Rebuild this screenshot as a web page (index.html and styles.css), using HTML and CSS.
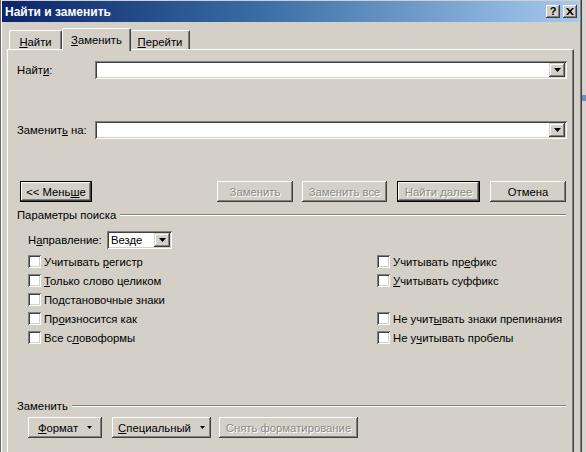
FILE: index.html
```html
<!DOCTYPE html>
<html lang="ru">
<head>
<meta charset="utf-8">
<title>Найти и заменить</title>
<link rel="stylesheet" href="styles.css">
</head>
<body>
<div class="window">
  <div class="titlebar">
    <span class="title">Найти и заменить</span>
    <div class="tb-btns">
      <span class="tbb help">?</span>
      <span class="tbb close"><svg width="8" height="7" viewBox="0 0 8 7"><path d="M0 0h2l2 2.2L6 0h2L5 3.5 8 7H6L4 4.8 2 7H0l3-3.5z" fill="#000"/></svg></span>
    </div>
  </div>
  <div class="content">
    <div class="tabs">
      <div class="tab t1"><span><u>Н</u>айти</span></div>
      <div class="tab t2 active"><span><u>З</u>аменить</span></div>
      <div class="tab t3"><span><u>П</u>ерейти</span></div>
    </div>
    <div class="panel">
      <div class="field-row first">
        <span class="field-label">Найт<u>и</u>:</span>
        <div class="combo wide"><span class="combo-text"></span><span class="drop"><svg width="7" height="4" viewBox="0 0 7 4"><path d="M0 0h7L3.5 4z" fill="#000"/></svg></span></div>
      </div>
      <div class="field-row second">
        <span class="field-label">Заменит<u>ь</u> на:</span>
        <div class="combo wide"><span class="combo-text"></span><span class="drop"><svg width="7" height="4" viewBox="0 0 7 4"><path d="M0 0h7L3.5 4z" fill="#000"/></svg></span></div>
      </div>
      <div class="btn-row">
        <span class="btn default less"><span>&lt;&lt; Мень<u>ш</u>е</span></span>
        <span class="btn disabled b-rep">Заменить</span>
        <span class="btn disabled b-repall">Заменить все</span>
        <span class="btn default disabled b-next">Найти далее</span>
        <span class="btn b-cancel">Отмена</span>
      </div>
      <div class="group-head params"><span class="group-title">Параметры поиска</span><span class="etch"></span></div>
      <div class="dir-row">
        <span class="dir-label">Н<u>а</u>правление:</span>
        <div class="combo dir"><span class="combo-text">Везде</span><span class="drop"><svg width="7" height="4" viewBox="0 0 7 4"><path d="M0 0h7L3.5 4z" fill="#000"/></svg></span></div>
      </div>
      <div class="checks">
        <label class="chk c-l r1"><span class="box"></span><span>Учитывать <u>р</u>егистр</span></label>
        <label class="chk c-r r1"><span class="box"></span><span>Учитывать пр<u>е</u>фикс</span></label>
        <label class="chk c-l r2"><span class="box"></span><span><u>Т</u>олько слово целиком</span></label>
        <label class="chk c-r r2"><span class="box"></span><span><u>У</u>читывать суффикс</span></label>
        <label class="chk c-l r3"><span class="box"></span><span>Подстановочные знаки</span></label>
        <label class="chk c-l r4"><span class="box"></span><span>Пр<u>о</u>износится как</span></label>
        <label class="chk c-r r4"><span class="box"></span><span>Не учит<u>ы</u>вать знаки препинания</span></label>
        <label class="chk c-l r5"><span class="box"></span><span>Все с<u>л</u>овоформы</span></label>
        <label class="chk c-r r5"><span class="box"></span><span>Не у<u>ч</u>итывать пробелы</span></label>
      </div>
      <div class="group-head repl"><span class="group-title">Заменить</span><span class="etch"></span></div>
      <div class="bottom-row">
        <span class="btn b-fmt"><span><u>Ф</u>ормат</span><svg class="tri" width="5" height="3" viewBox="0 0 5 3"><path d="M0 0h5L2.5 3z" fill="#000"/></svg></span>
        <span class="btn b-spec"><span><u>С</u>пециальный</span><svg class="tri" width="5" height="3" viewBox="0 0 5 3"><path d="M0 0h5L2.5 3z" fill="#000"/></svg></span>
        <span class="btn disabled b-clear">Снять форматирование</span>
      </div>
    </div>
  </div>
</div>
<div class="desktop"><span class="desk-mark"></span></div>
</body>
</html>
```
FILE: styles.css
```css
html, body {
  margin: 0;
  padding: 0;
}
body {
  width: 586px;
  height: 452px;
  overflow: hidden;
  display: flex;
  background: #d6d3cc;
  font-family: "Liberation Sans", Arial, sans-serif;
  font-size: 11.3px;
  color: #000;
}
u { text-decoration: underline; text-underline-offset: 1px; }

.window {
  flex: none;
  width: 582px;
  height: 480px;
  box-sizing: border-box;
  background: #d4d0c8;
  border-left: 1px solid #6a6a6a;
  border-right: 1px solid #404040;
  box-shadow: inset 1px 0 #fff, inset -1px 0 #808080;
  padding: 1px 2px 0 1px;
  display: flex;
  flex-direction: column;
}

.titlebar {
  height: 21px;
  flex: none;
  display: flex;
  align-items: center;
  justify-content: space-between;
  background: linear-gradient(to right, #0a246a 0%, #3a6ea5 45%, #a6caf0 100%);
  padding: 0 2px 0 3px;
}
.title {
  color: #fff;
  font-weight: bold;
  font-size: 12px;
}
.tb-btns {
  display: flex;
  gap: 3px;
}
.tbb {
  width: 14px;
  height: 13px;
  box-sizing: border-box;
  background: #d4d0c8;
  box-shadow: inset -1px -1px #404040, inset 1px 1px #fff, inset -2px -2px #808080;
  display: flex;
  align-items: center;
  justify-content: center;
  font-weight: bold;
  font-size: 11px;
  line-height: 1;
}

.content {
  display: flex;
  flex-direction: column;
  padding: 0 5px 0 5px;
}

.tabs {
  display: flex;
  align-items: flex-end;
  height: 29px;
  padding-left: 2px;
  position: relative;
  z-index: 1;
  margin-bottom: -2px;
}
.tab {
  height: 19px;
  box-sizing: border-box;
  border-top: 1px solid #fff;
  border-left: 1px solid #fff;
  border-right: 1px solid #404040;
  border-radius: 2px 2px 0 0;
  box-shadow: inset -1px 0 #808080;
  display: flex;
  align-items: center;
  justify-content: center;
  margin-bottom: 2px;
  padding-top: 3px;
}
.t1 { width: 53px; }
.t2 { width: 69px; }
.t3 { width: 59px; border-left: none; }
.tab.active {
  height: 23px;
  margin-bottom: 0;
  background: #d4d0c8;
  padding-top: 2px;
  padding-bottom: 2px;
}

.panel {
  height: 420px;
  box-sizing: border-box;
  border-top: 1px solid #fff;
  border-left: 1px solid #fff;
  border-right: 1px solid #404040;
  box-shadow: inset -1px 0 #808080;
  padding: 0 6px 0 9px;
  display: flex;
  flex-direction: column;
}

.field-row {
  display: flex;
  align-items: center;
}
.field-row.first { margin-top: 11px; }
.field-row.second { margin-top: 42px; }
.field-label {
  width: 78px;
  flex: none;
}

.combo {
  height: 18px;
  box-sizing: border-box;
  background: #fff;
  box-shadow: inset 1px 1px #808080, inset -1px -1px #fff, inset 2px 2px #404040, inset -2px -2px #d4d0c8;
  display: flex;
  align-items: center;
  justify-content: space-between;
  padding: 2px;
}
.combo.wide { flex: 1; }
.combo-text { padding-left: 2px; }
.drop {
  width: 16px;
  height: 14px;
  box-sizing: border-box;
  background: #d4d0c8;
  box-shadow: inset -1px -1px #404040, inset 1px 1px #d4d0c8, inset -2px -2px #808080, inset 2px 2px #fff;
  display: flex;
  align-items: center;
  justify-content: center;
}

.btn {
  height: 21px;
  box-sizing: border-box;
  background: #d4d0c8;
  box-shadow: inset -1px -1px #404040, inset 1px 1px #fff, inset -2px -2px #808080;
  display: flex;
  align-items: center;
  justify-content: center;
  flex: none;
  white-space: nowrap;
}
.btn.default {
  box-shadow: inset 0 0 0 1px #000, inset -2px -2px #404040, inset 2px 2px #fff, inset -3px -3px #808080;
}
.btn.disabled {
  color: #8c8a84;
  text-shadow: 1px 1px 0 #fff;
}

.btn-row {
  display: flex;
  margin-top: 42px;
}
.less { width: 72px; margin-left: 3px; }
.b-rep { width: 76px; margin-left: 125px; }
.b-repall { width: 85px; margin-left: 9px; }
.b-next { width: 83px; margin-left: 10px; }
.b-cancel { width: 76px; margin-left: 10px; }

.group-head {
  display: flex;
  align-items: center;
  height: 13px;
}
.group-head.params { margin-top: 6px; }
.group-head.repl { margin-top: 52px; }
.etch {
  flex: 1;
  height: 0;
  border-top: 1px solid #808080;
  border-bottom: 1px solid #fff;
  margin-left: 4px;
  margin-right: 1px;
}

.dir-row {
  display: flex;
  align-items: center;
  margin-top: 10px;
  padding-left: 11px;
}
.dir-label { width: 79px; flex: none; }
.combo.dir { width: 65px; }

.checks {
  display: grid;
  grid-template-columns: 349px 1fr;
  grid-template-rows: repeat(5, 19px);
  margin-top: 3px;
  padding-left: 11px;
}
.chk {
  display: flex;
  align-items: center;
  gap: 3px;
}
.c-l { grid-column: 1; }
.c-r { grid-column: 2; }
.r1 { grid-row: 1; }
.r2 { grid-row: 2; }
.r3 { grid-row: 3; }
.r4 { grid-row: 4; }
.r5 { grid-row: 5; }
.box {
  width: 13px;
  height: 13px;
  flex: none;
  background: #fff;
  box-shadow: inset 1px 1px #808080, inset -1px -1px #fff, inset 2px 2px #404040, inset -2px -2px #d4d0c8;
}

.bottom-row {
  display: flex;
  margin-top: 5px;
  padding-left: 11px;
}
.b-fmt { width: 74px; gap: 9px; }
.b-spec { width: 99px; gap: 9px; margin-left: 10px; }
.b-clear { width: 139px; margin-left: 8px; }
.tri { display: block; }

.desktop {
  flex: 1;
  display: flex;
  flex-direction: column;
}
.desk-mark {
  margin-top: 95px;
  height: 6px;
  background: #6d8fbf;
}
```
